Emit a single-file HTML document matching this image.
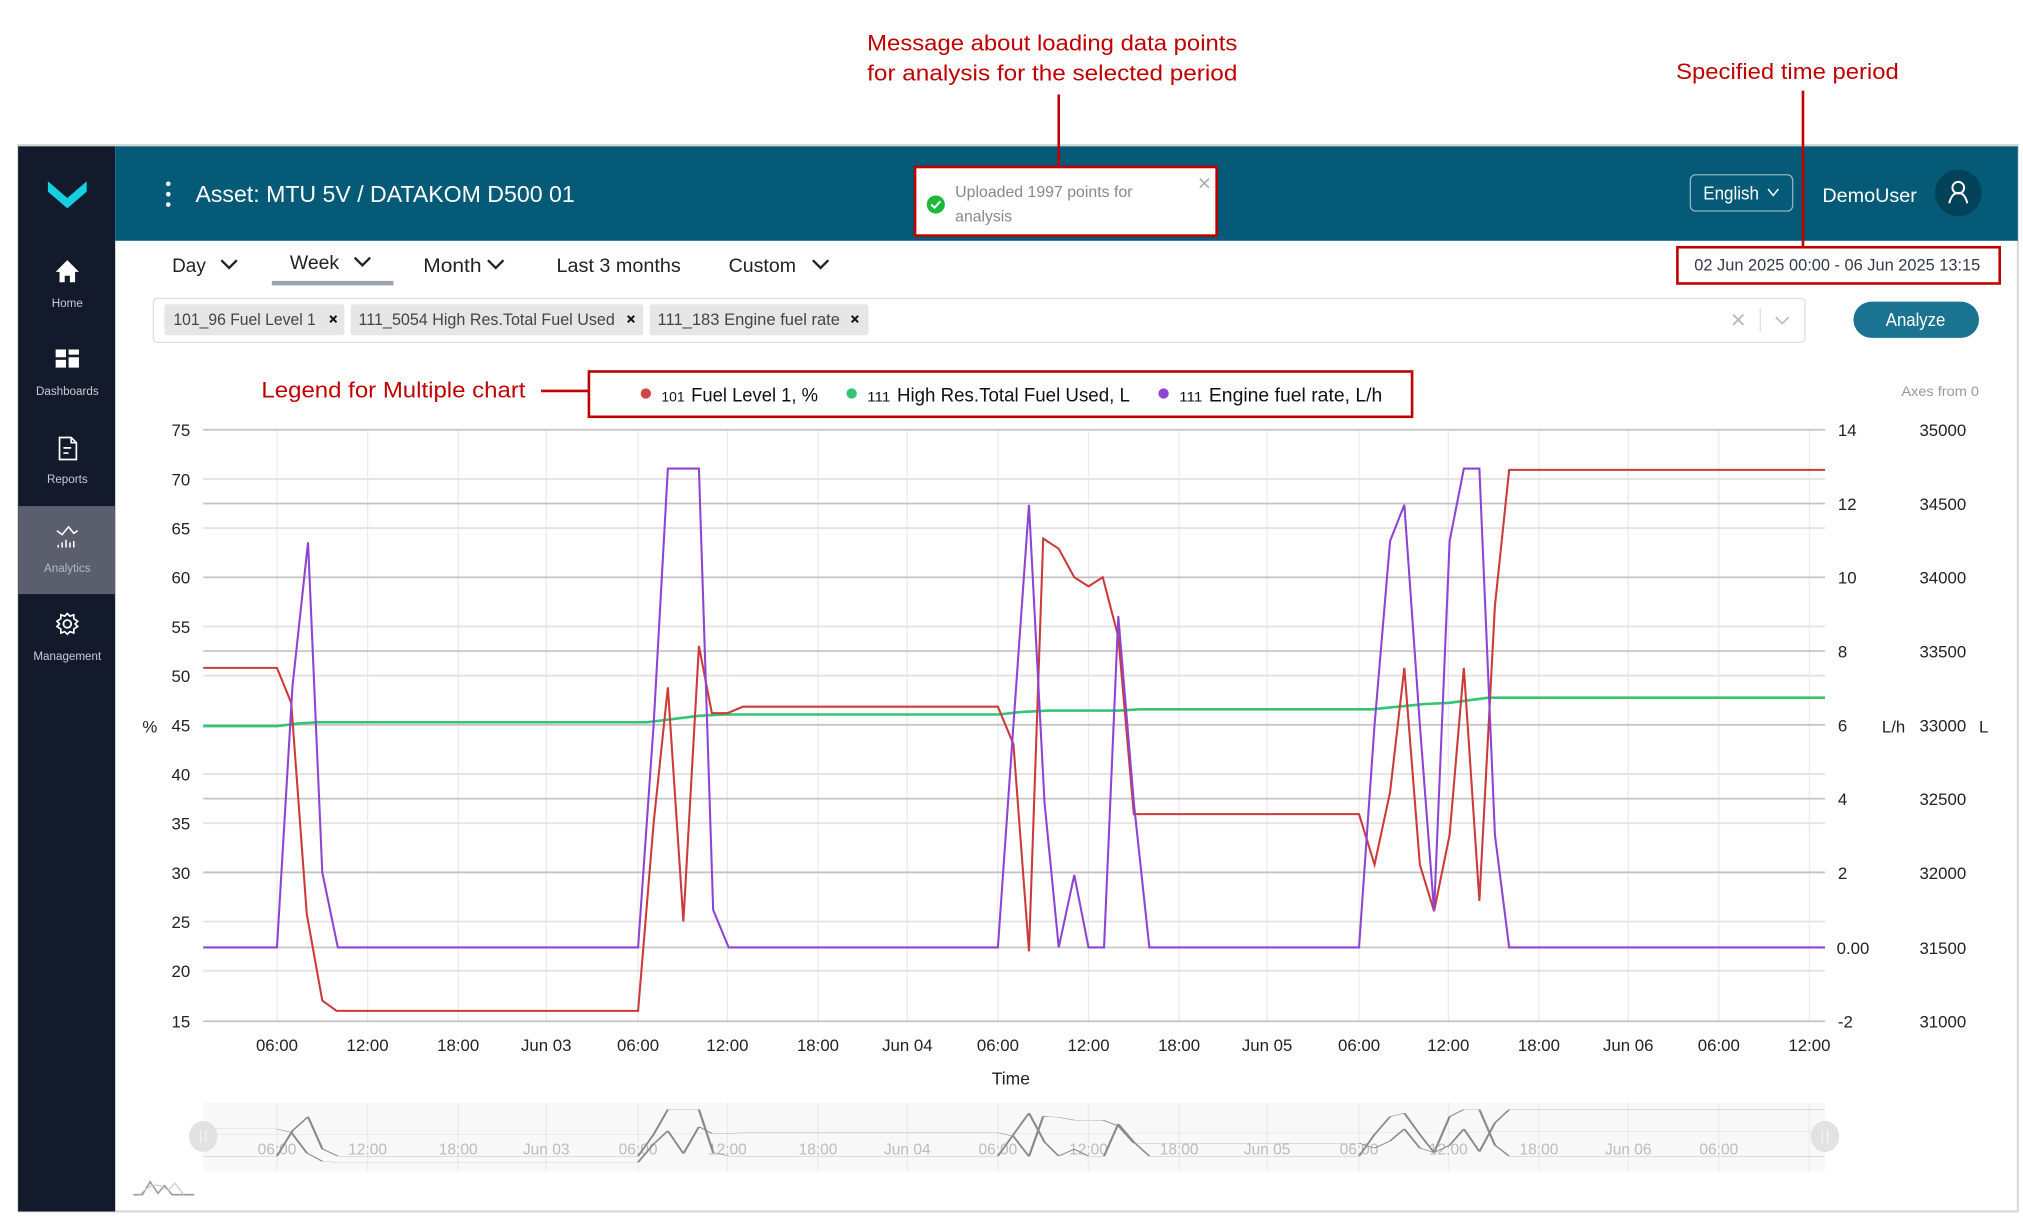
<!DOCTYPE html>
<html><head><meta charset="utf-8"><style>
html,body{margin:0;padding:0;background:#fff;overflow:hidden}
svg{display:block}
text{font-family:"Liberation Sans",sans-serif}
</style></head><body>
<svg width="2023" height="1218" viewBox="0 0 1563 941" xmlns="http://www.w3.org/2000/svg">
<rect width="1563" height="941" fill="#fff"/>
<!-- frame -->
<rect x="14" y="112" width="1545" height="824" fill="#fff" stroke="#d6d6d6" stroke-width="1.5"/>
<!-- sidebar -->
<rect x="14" y="113" width="75" height="823" fill="#131a2b"/>
<rect x="14" y="391" width="75" height="68" fill="#5b5e6c"/>
<path d="M37 140 L52 153 L67 140 L67 148 L52 161 L37 148 Z" fill="#14d0e0"/>
<!-- home -->
<path d="M52 201 L43 210 L46 210 L46 218 L50 218 L50 213 L54 213 L54 218 L58 218 L58 210 L61 210 Z" fill="#fff"/>
<text x="52" y="237" font-size="9" fill="#c9ccd3" text-anchor="middle">Home</text>
<!-- dashboards -->
<rect x="43" y="270" width="8" height="6" fill="#fff"/><rect x="53" y="270" width="8" height="4" fill="#fff"/>
<rect x="43" y="278" width="8" height="6" fill="#fff"/><rect x="53" y="276" width="8" height="8" fill="#fff"/>
<text x="52" y="305" font-size="9" fill="#c9ccd3" text-anchor="middle">Dashboards</text>
<!-- reports -->
<path d="M46 338 L55 338 L59 342 L59 355 L46 355 Z M55 338 L55 342 L59 342 M49 346 L55 346 M49 350 L53 350" fill="none" stroke="#fff" stroke-width="1.3"/>
<text x="52" y="373" font-size="9" fill="#c9ccd3" text-anchor="middle">Reports</text>
<!-- analytics -->
<path d="M44 410 L48 413 L53 407 L57 412 L60 410" fill="none" stroke="#fff" stroke-width="1.2"/>
<path d="M45 421 L45 423 M48 419 L48 423 M51 417 L51 423 M54 419 L54 423 M57 418 L57 423" stroke="#fff" stroke-width="1.2"/>
<text x="52" y="442" font-size="9" fill="#b5b8c2" text-anchor="middle">Analytics</text>
<!-- gear -->
<circle cx="52" cy="482" r="3" fill="none" stroke="#fff" stroke-width="1.4"/>
<path d="M52 474 L54 476 L57 475 L57 478 L60 480 L58 482 L60 484 L57 486 L57 489 L54 488 L52 490 L50 488 L47 489 L47 486 L44 484 L46 482 L44 480 L47 478 L47 475 L50 476 Z" fill="none" stroke="#fff" stroke-width="1.3"/>
<text x="52" y="510" font-size="9" fill="#c9ccd3" text-anchor="middle">Management</text>
<!-- header -->
<rect x="89" y="113" width="1470" height="73" fill="#055a77"/>
<circle cx="130" cy="142" r="1.8" fill="#fff"/><circle cx="130" cy="150" r="1.8" fill="#fff"/><circle cx="130" cy="158" r="1.8" fill="#fff"/>
<text x="151" y="156" font-size="18" fill="#fff" textLength="293" lengthAdjust="spacingAndGlyphs">Asset: MTU 5V / DATAKOM D500 01</text>
<!-- toast -->
<rect x="707" y="129" width="233" height="53" fill="#fff" stroke="#c00000" stroke-width="2"/>
<circle cx="723" cy="158" r="7" fill="#1db83a"/>
<path d="M719.5 158 L722 160.5 L726.5 155.5" fill="none" stroke="#fff" stroke-width="1.6"/>
<text x="738" y="152" font-size="12" fill="#888" textLength="137" lengthAdjust="spacingAndGlyphs">Uploaded 1997 points for</text>
<text x="738" y="171" font-size="12" fill="#888" textLength="44" lengthAdjust="spacingAndGlyphs">analysis</text>
<path d="M927 138 L934 145 M934 138 L927 145" stroke="#aaa" stroke-width="1.2"/>
<!-- language / user -->
<rect x="1306" y="135" width="79" height="28" rx="4" fill="none" stroke="#8fb3c0" stroke-width="1"/>
<text x="1316" y="154" font-size="14" fill="#fff" textLength="43" lengthAdjust="spacingAndGlyphs">English</text>
<path d="M1366 146 L1370 151 L1374 146" fill="none" stroke="#fff" stroke-width="1.1"/>
<text x="1408" y="156" font-size="15" fill="#fff" textLength="73" lengthAdjust="spacingAndGlyphs">DemoUser</text>
<circle cx="1513" cy="149" r="18" fill="#03435a"/>
<circle cx="1513" cy="145" r="4.5" fill="none" stroke="#fff" stroke-width="1.5"/>
<path d="M1506 157 Q1508 149 1513 149 Q1518 149 1520 157" fill="none" stroke="#fff" stroke-width="1.5"/>
<!-- annotations -->
<g fill="#c00000" font-size="17">
<text x="670" y="39" textLength="286" lengthAdjust="spacingAndGlyphs">Message about loading  data points</text>
<text x="670" y="62" textLength="286" lengthAdjust="spacingAndGlyphs">for analysis for the selected  period</text>
<text x="1295" y="61" textLength="172" lengthAdjust="spacingAndGlyphs">Specified time period</text>
<text x="202" y="307" textLength="204" lengthAdjust="spacingAndGlyphs">Legend for Multiple chart</text>
</g>
<path d="M818 73 L818 129" stroke="#c00000" stroke-width="2"/>
<path d="M1393 70 L1393 191" stroke="#c00000" stroke-width="2"/>
<path d="M418 302 L455 302" stroke="#c00000" stroke-width="2"/>
<!-- tabs -->
<g font-size="15" fill="#222">
<text x="133" y="210" textLength="26" lengthAdjust="spacingAndGlyphs">Day</text>
<text x="224" y="208" textLength="38" lengthAdjust="spacingAndGlyphs">Week</text>
<text x="327" y="210" textLength="45" lengthAdjust="spacingAndGlyphs">Month</text>
<text x="430" y="210" textLength="96" lengthAdjust="spacingAndGlyphs">Last 3 months</text>
<text x="563" y="210" textLength="52" lengthAdjust="spacingAndGlyphs">Custom</text>
</g>
<g fill="none" stroke="#222" stroke-width="1.8">
<path d="M171 201 L177 207 L183 201"/><path d="M274 199 L280 205 L286 199"/>
<path d="M377 201 L383 207 L389 201"/><path d="M628 201 L634 207 L640 201"/>
</g>
<rect x="210" y="217" width="94" height="3.5" fill="#9ba3ad"/>
<!-- date box -->
<rect x="1296" y="191" width="249" height="28" fill="#fff" stroke="#c00000" stroke-width="2"/>
<text x="1309" y="209" font-size="13" fill="#333a48" textLength="221" lengthAdjust="spacingAndGlyphs">02 Jun 2025 00:00 - 06 Jun 2025 13:15</text>
<!-- filter -->
<rect x="118.5" y="230.5" width="1276" height="34" rx="3" fill="#fff" stroke="#ddd"/>
<rect x="127" y="235" width="139" height="24" rx="2" fill="#e6e6e6"/>
<rect x="271" y="235" width="226" height="24" rx="2" fill="#e6e6e6"/>
<rect x="502" y="235" width="169" height="24" rx="2" fill="#e6e6e6"/>
<g font-size="13" fill="#444">
<text x="134" y="251" textLength="110" lengthAdjust="spacingAndGlyphs">101_96 Fuel Level 1</text>
<text x="277" y="251" textLength="198" lengthAdjust="spacingAndGlyphs">111_5054 High Res.Total Fuel Used</text>
<text x="508" y="251" textLength="141" lengthAdjust="spacingAndGlyphs">111_183 Engine fuel rate</text>
</g>
<g stroke="#111" stroke-width="1.5">
<path d="M255 244 L260 249 M260 244 L255 249"/><path d="M485 244 L490 249 M490 244 L485 249"/><path d="M658 244 L663 249 M663 244 L658 249"/>
</g>
<path d="M1339 243 L1347 251 M1347 243 L1339 251" stroke="#bbb" stroke-width="1.5"/>
<path d="M1360 238 L1360 256" stroke="#ddd"/>
<path d="M1372 245 L1377 250 L1382 245" fill="none" stroke="#bbb" stroke-width="1.3"/>
<rect x="1432" y="233" width="97" height="28" rx="14" fill="#1a7491"/>
<text x="1480" y="252" font-size="14" fill="#fff" text-anchor="middle" textLength="46" lengthAdjust="spacingAndGlyphs">Analyze</text>
<!-- legend -->
<rect x="455" y="287" width="636" height="35" fill="#fff" stroke="#c00000" stroke-width="2"/>
<circle cx="499" cy="304" r="4" fill="#d04545"/>
<circle cx="658" cy="304" r="4" fill="#33c573"/>
<circle cx="899" cy="304" r="4" fill="#8e44d2"/>
<g fill="#111">
<text x="511" y="310" font-size="11" textLength="18" lengthAdjust="spacingAndGlyphs">101</text>
<text x="534" y="310" font-size="15" textLength="98" lengthAdjust="spacingAndGlyphs">Fuel Level 1, %</text>
<text x="670" y="310" font-size="11" textLength="18" lengthAdjust="spacingAndGlyphs">111</text>
<text x="693" y="310" font-size="15" textLength="180" lengthAdjust="spacingAndGlyphs">High Res.Total Fuel Used, L</text>
<text x="911" y="310" font-size="11" textLength="18" lengthAdjust="spacingAndGlyphs">111</text>
<text x="934" y="310" font-size="15" textLength="134" lengthAdjust="spacingAndGlyphs">Engine fuel rate, L/h</text>
</g>
<text x="1529" y="306" font-size="11" fill="#999" text-anchor="end" textLength="60" lengthAdjust="spacingAndGlyphs">Axes from 0</text>
<!-- grid -->
<g stroke="#ebebeb" stroke-width="1">
<path d="M214 332V789M284 332V789M354 332V789M422 332V789M493 332V789M562 332V789M632 332V789M701 332V789M771 332V789M841 332V789M911 332V789M979 332V789M1050 332V789M1119 332V789M1189 332V789M1258 332V789M1328 332V789M1398 332V789"/>
</g>
<g stroke="#e4e4e4" stroke-width="1.5">
<path d="M157 370H1410M157 408H1410M157 446H1410M157 484H1410M157 522H1410M157 560H1410M157 598H1410M157 636H1410M157 674H1410M157 712H1410M157 750H1410"/>
</g>
<g stroke="#c4c4c4" stroke-width="1.3">
<path d="M157 332H1410M157 389H1410M157 446H1410M157 503H1410M157 560H1410M157 617H1410M157 674H1410M157 732H1410M157 789H1410"/>
</g>
<!-- axis labels -->
<g font-size="13" fill="#222" text-anchor="end">
<text x="147" y="337">75</text><text x="147" y="375">70</text><text x="147" y="413">65</text><text x="147" y="451">60</text><text x="147" y="489">55</text><text x="147" y="527">50</text><text x="147" y="565">45</text><text x="147" y="603">40</text><text x="147" y="641">35</text><text x="147" y="679">30</text><text x="147" y="717">25</text><text x="147" y="755">20</text><text x="147" y="794">15</text>
</g>
<g font-size="13" fill="#222">
<text x="1420" y="337">14</text><text x="1420" y="394">12</text><text x="1420" y="451">10</text><text x="1420" y="508">8</text><text x="1420" y="565">6</text><text x="1420" y="622">4</text><text x="1420" y="679">2</text><text x="1419" y="737">0.00</text><text x="1420" y="794">-2</text>
<text x="1483" y="337">35000</text><text x="1483" y="394">34500</text><text x="1483" y="451">34000</text><text x="1483" y="508">33500</text><text x="1483" y="565">33000</text><text x="1483" y="622">32500</text><text x="1483" y="679">32000</text><text x="1483" y="737">31500</text><text x="1483" y="794">31000</text>
<text x="110" y="566">%</text><text x="1454" y="566">L/h</text><text x="1529" y="566">L</text>
</g>
<g font-size="13" fill="#222" text-anchor="middle">
<text x="214" y="812">06:00</text><text x="284" y="812">12:00</text><text x="354" y="812">18:00</text><text x="422" y="812">Jun 03</text><text x="493" y="812">06:00</text><text x="562" y="812">12:00</text><text x="632" y="812">18:00</text><text x="701" y="812">Jun 04</text><text x="771" y="812">06:00</text><text x="841" y="812">12:00</text><text x="911" y="812">18:00</text><text x="979" y="812">Jun 05</text><text x="1050" y="812">06:00</text><text x="1119" y="812">12:00</text><text x="1189" y="812">18:00</text><text x="1258" y="812">Jun 06</text><text x="1328" y="812">06:00</text><text x="1398" y="812">12:00</text>
<text x="781" y="838" font-size="13.5">Time</text>
</g>
<!-- series -->
<defs>
<polyline id="red" points="157,516 214,516 225,543 237,706 249,773 260,781 493,781 505,636 516,531 528,712 540,499 550,551 562,551 574,546 771,546 783,575 795,735 806,416 818,424 830,446 841,453 852,446 864,492 876,629 1050,629 1062,668 1074,612 1085,516 1097,668 1108,704 1120,645 1131,516 1143,696 1155,468 1166,363 1410,363"/>
<polyline id="green" points="157,561 214,561 230,559 245,558 500,558 540,553 560,552 771,552 790,550 810,549 865,549 880,548 1060,548 1080,546 1100,544 1120,543 1150,539 1410,539"/>
<polyline id="purple" points="157,732 214,732 226,530 238,419 249,674 261,732 493,732 505,560 516,362 540,362 551,703 563,732 771,732 783,560 795,390 807,620 818,732 830,676 841,732 853,732 864,476 876,620 888,732 1050,732 1062,560 1074,418 1085,390 1097,560 1108,704 1120,418 1131,362 1143,362 1155,645 1166,732 1410,732"/>
</defs>
<use href="#green" fill="none" stroke="#33c573" stroke-width="2"/>
<use href="#red" fill="none" stroke="#cc3a3a" stroke-width="1.6"/>
<use href="#purple" fill="none" stroke="#8e44d2" stroke-width="1.6"/>
<!-- navigator -->
<rect x="157" y="852" width="1253" height="53" fill="#f8f8f8"/>
<g stroke="#ececec"><path d="M214 852V905M284 852V905M354 852V905M422 852V905M493 852V905M562 852V905M632 852V905M701 852V905M771 852V905M841 852V905M911 852V905M979 852V905M1050 852V905M1119 852V905M1189 852V905M1258 852V905M1328 852V905M1398 852V905"/></g>
<g font-size="12" fill="#bbb" text-anchor="middle">
<text x="214" y="892">06:00</text><text x="284" y="892">12:00</text><text x="354" y="892">18:00</text><text x="422" y="892">Jun 03</text><text x="493" y="892">06:00</text><text x="562" y="892">12:00</text><text x="632" y="892">18:00</text><text x="701" y="892">Jun 04</text><text x="771" y="892">06:00</text><text x="841" y="892">12:00</text><text x="911" y="892">18:00</text><text x="979" y="892">Jun 05</text><text x="1050" y="892">06:00</text><text x="1119" y="892">12:00</text><text x="1189" y="892">18:00</text><text x="1258" y="892">Jun 06</text><text x="1328" y="892">06:00</text>
</g>
<g transform="translate(0,822) scale(1,0.0973)" fill="none">
<use href="#green" stroke="#c8c8c8" stroke-width="2" vector-effect="non-scaling-stroke"/>
<use href="#red" stroke="#8a8a8a" stroke-width="1.8" vector-effect="non-scaling-stroke"/>
<use href="#purple" stroke="#8a8a8a" stroke-width="1.8" vector-effect="non-scaling-stroke"/>
</g>
<ellipse cx="157" cy="878" rx="11" ry="12" fill="#e2e2e2"/>
<ellipse cx="1410" cy="878" rx="11" ry="12" fill="#e2e2e2"/>
<path d="M155 873V883M159 873V883M1408 873V883M1412 873V883" stroke="#f4f4f4"/>
<path d="M103 923 L110 923 L116 913 L122 922 L127 916 L133 923 L150 923" fill="none" stroke="#999" stroke-width="1.2"/>
<path d="M108 923 Q120 910 130 920 L135 914 L142 923" fill="none" stroke="#ccc" stroke-width="1"/>
</svg>
</body></html>
